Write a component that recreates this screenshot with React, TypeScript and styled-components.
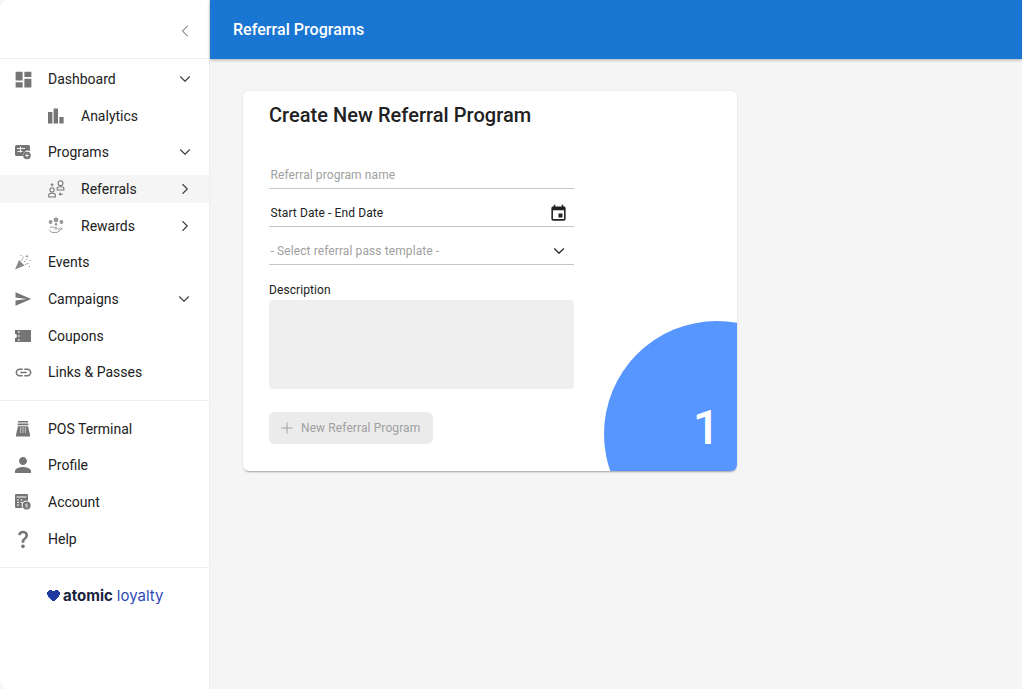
import React from 'react';
import styled, { createGlobalStyle } from 'styled-components';
import { ChevronDown, ChevronLeft, ChevronRight, Plus } from 'lucide-react';

const GlobalStyle = createGlobalStyle`
  html, body {
    margin: 0;
    padding: 0;
    height: 100%;
  }
  body {
    font-family: Roboto, 'Liberation Sans', sans-serif;
    background: #f5f5f5;
  }
`;

const Frame = styled.div`
  display: flex;
  height: 100vh;
  overflow: hidden;
  background: #f5f5f5;
`;

const Sidebar = styled.aside`
  width: 209px;
  flex-shrink: 0;
  background: #ffffff;
  border-right: 1px solid #eeeeee;
  border-top-left-radius: 8px;
  border-bottom-left-radius: 8px;
  display: flex;
  flex-direction: column;
`;

const SidebarTop = styled.div`
  height: 59px;
  display: flex;
  align-items: center;
  justify-content: flex-end;
  padding: 3px 14px 0 0;
  box-sizing: border-box;
  border-bottom: 1px solid #eeeeee;
  color: #757575;
`;

const NavGroup = styled.nav<{ $secondary?: boolean }>`
  display: flex;
  flex-direction: column;
  gap: 8.67px;
  padding: ${p => (p.$secondary ? '13.5px 0 14.5px' : '6px 0 14px')};
  border-bottom: 1px solid #eeeeee;
`;

const NavRow = styled.div<{ $sub?: boolean; $active?: boolean }>`
  height: 28px;
  display: flex;
  align-items: center;
  padding-left: ${p => (p.$sub ? '48px' : '15px')};
  padding-right: 15px;
  background: ${p => (p.$active ? '#f5f5f5' : 'transparent')};
  color: #212121;
  font-size: 14px;
`;

const IconSlot = styled.span`
  width: 16px;
  height: 16px;
  margin-right: 17px;
  display: flex;
  align-items: center;
  justify-content: center;
  flex-shrink: 0;
  color: #757575;

  svg {
    flex-shrink: 0;
    display: block;
  }
`;

const NavLabel = styled.span`
  flex: 1;
  white-space: nowrap;
`;

const Caret = styled.span<{ $nudge?: boolean }>`
  display: flex;
  color: #424242;
  margin-right: ${p => (p.$nudge ? '1px' : '0')};
`;

const Logo = styled.div`
  display: flex;
  align-items: center;
  padding: 19px 0 0 47px;
  font-family: Inter, 'Noto Sans', sans-serif;
  font-size: 15px;
  line-height: 18px;
  white-space: nowrap;
`;

const LogoMark = styled.svg`
  width: 13px;
  height: 12px;
  margin-right: 3px;
  color: #1f3a9e;
`;

const LogoStrong = styled.span`
  font-weight: 700;
  color: #1a2240;
  margin-right: 4px;
`;

const LogoLight = styled.span`
  font-weight: 400;
  color: #2f4bb8;
`;

const Main = styled.main`
  flex: 1;
  min-width: 0;
  display: flex;
  flex-direction: column;
`;

const TopBar = styled.header`
  height: 59px;
  flex-shrink: 0;
  background: #1976d2;
  color: #ffffff;
  display: flex;
  align-items: center;
  padding-left: 23px;
  font-size: 16px;
  font-weight: 500;
  letter-spacing: 0.05px;
  box-shadow: 0 1px 3px rgba(0, 0, 0, 0.3);
`;

const Content = styled.div`
  padding: 32px 33px;
`;

const Card = styled.section`
  position: relative;
  overflow: hidden;
  width: 494px;
  height: 380px;
  box-sizing: border-box;
  padding: 10px 26px 0;
  background: #ffffff;
  border-radius: 6px;
  box-shadow: 0 2px 2px -1px rgba(0, 0, 0, 0.32), 0 0 3px rgba(0, 0, 0, 0.08);
`;

const CardTitle = styled.h2`
  margin: 0 0 22px;
  font-size: 20px;
  font-weight: 500;
  line-height: 28px;
  letter-spacing: 0.04px;
  color: #212121;
`;

const Form = styled.div`
  width: 305px;
  display: flex;
  flex-direction: column;
`;

const Field = styled.div`
  height: 38px;
  box-sizing: border-box;
  display: flex;
  align-items: center;
  justify-content: space-between;
  padding: 11px 6px 0 1.5px;
  border-bottom: 1px solid #c4c4c4;
`;

const FieldText = styled.span<{ $muted?: boolean }>`
  font-size: 12px;
  letter-spacing: 0.1px;
  color: ${p => (p.$muted ? '#a0a0a0' : '#212121')};
`;

const FieldIcon = styled.span`
  display: flex;
  color: #212121;
`;

const FieldLabel = styled.label`
  margin-top: 16px;
  font-size: 12px;
  line-height: 18px;
  letter-spacing: 0.08px;
  color: #212121;
`;

const TextArea = styled.div`
  margin-top: 1px;
  height: 89px;
  background: #efefef;
  border-radius: 4px;
`;

const AddButton = styled.button`
  margin-top: 23px;
  width: 164px;
  height: 32px;
  padding: 0 0 0 9px;
  display: flex;
  align-items: center;
  gap: 5px;
  border: none;
  border-radius: 6px;
  background: #ebebeb;
  color: #a0a0a0;
  font-family: inherit;
  font-size: 12px;
  font-weight: 400;
  letter-spacing: 0.1px;
`;

const StepBubble = styled.div`
  position: absolute;
  left: 361px;
  top: 230px;
  width: 226px;
  height: 226px;
  border-radius: 50%;
  background: #5896ff;
`;

const StepNumber = styled.span`
  position: absolute;
  right: 17px;
  bottom: 19px;
  font-size: 48px;
  font-weight: 500;
  line-height: 48px;
  color: #ffffff;
`;

const Mi: React.FC<{ size: number; d: string }> = ({ size, d }) => (
  <svg width={size} height={size} viewBox="0 0 24 24" fill="currentColor">
    <path d={d} />
  </svg>
);

const BarsIcon = () => (
  <svg width="16" height="16" viewBox="0 0 16 16" fill="currentColor">
    <path d="M0 4h4.4v11.5H0zM5.6.4H10v15.1H5.6zM11.4 9H15.6v6.5h-4.2z" />
  </svg>
);

const ProgramsIcon = () => (
  <svg width="16" height="16" viewBox="0 0 16 16" fill="currentColor">
    <path d="M1.5 1h12A1.5 1.5 0 0 1 15 2.5V7a4.5 4.5 0 0 0-6.5 5H1.5A1.5 1.5 0 0 1 0 10.5v-8A1.5 1.5 0 0 1 1.5 1z" />
    <path d="M2 4.5h8M5.5 2.5v6M2.5 7.5h5" stroke="#fff" strokeWidth="0.9" fill="none" />
    <circle cx="12" cy="11.5" r="3.8" />
    <path d="M12 9.6v3.8M10.1 11.5h3.8" stroke="#fff" strokeWidth="0.8" />
  </svg>
);

const ReferralsIcon = () => (
  <svg width="17" height="18" viewBox="0 0 16 17" fill="none" stroke="currentColor" strokeWidth="1">
    <circle cx="3.8" cy="9.4" r="2" />
    <path d="M.7 16v-1.6c0-1 1.3-1.8 3.1-1.8s3.1.8 3.1 1.8V16z" />
    <circle cx="11.8" cy="3" r="2.3" />
    <path d="M8.6 9.4V8c0-1 1.4-1.7 3.2-1.7S15 7 15 8v1.4z" />
    <path d="M3.8 3v2.8M2.4 4.4h2.8M10.6 13.4h3.4M10.6 13.4l1.2-1.2M10.6 13.4l1.2 1.2" />
  </svg>
);

const RewardsIcon = () => (
  <svg width="16" height="17" viewBox="0 0 16 17" fill="currentColor" opacity="0.75">
    <circle cx="8" cy="3" r="2.4" />
    <circle cx="2.6" cy="5" r="1.9" />
    <circle cx="13.4" cy="5" r="1.9" />
    <circle cx="8" cy="7.4" r="1.3" />
    <path d="M2 10.6c1.6-1 3-.8 4.4 0h2c1 0 1 1.4 0 1.4H6.6M1.6 13l2 2.4h5.6l5-3.8c-.6-1-1.6-.8-2.4-.2l-2 1.2" fill="none" stroke="currentColor" strokeWidth="1" />
  </svg>
);

const EventsIcon = () => (
  <svg width="16" height="16" viewBox="0 0 16 16" fill="currentColor" opacity="0.85">
    <path d="M0 15.5 4 6l5.5 5.5z" />
    <path d="M6.5 6.5 9 2M9 8l3.5-3.5M10 10.5l4-1.5" stroke="currentColor" strokeWidth="1" fill="none" strokeDasharray="1.4 1" />
    <path d="M12 .5l.5 1.3 1.3.5-1.3.5-.5 1.3-.5-1.3-1.3-.5 1.3-.5zM5.5 1h1v1h-1zM14.5 6h1v1h-1zM14 12h1v1h-1z" />
  </svg>
);

const CouponIcon = () => (
  <svg width="16" height="12" viewBox="0 0 16 12" fill="currentColor">
    <path d="M0 0h16v12H0V8a2 2 0 0 0 0-4z" />
    <path d="M3.4 1h1v2h-1zM3.4 5h1v2h-1zM3.4 9h1v2h-1z" fill="#fff" />
  </svg>
);

const PosIcon = () => (
  <svg width="16" height="16" viewBox="0 0 16 16" fill="currentColor">
    <path d="M3 0h10v1.6H3zM2.6 2.6h10.8v1.6H2.6z" />
    <path d="M3 5.2h10l2 8.6v1.6H1v-1.6z" />
    <path d="M5 7h6M5 9h6M5 11h6" stroke="#fff" strokeWidth="1" strokeDasharray="1.2 1.2" fill="none" />
  </svg>
);

const AccountIcon = () => (
  <svg width="16" height="16" viewBox="0 0 16 16" fill="currentColor">
    <path d="M1.2 0h10.6A1.2 1.2 0 0 1 13 1.2V7a4.6 4.6 0 0 0-5.4 7H1.2A1.2 1.2 0 0 1 0 12.8V1.2A1.2 1.2 0 0 1 1.2 0z" />
    <path d="M1.5 3h10M2 6h2M5.5 6h2M2 8.5h2M5.5 8.5h2M2 11h2" stroke="#fff" strokeWidth="1" fill="none" />
    <circle cx="11.6" cy="11.6" r="4" />
    <path d="M12.8 10.2h-1.8a.8.8 0 0 0 0 1.5h1.2a.8.8 0 0 1 0 1.5h-1.8" stroke="#fff" strokeWidth="0.7" fill="none" />
  </svg>
);

const paths = {
  dashboard: 'M3 13h8V3H3v10zm0 8h8v-6H3v6zm10 0h8V11h-8v10zm0-18v6h8V3h-8z',
  send: 'M2.01 21L23 12 2.01 3 2 10l15 2-15 2z',
  link: 'M3.9 12c0-1.71 1.39-3.1 3.1-3.1h4V7H7c-2.76 0-5 2.24-5 5s2.24 5 5 5h4v-1.9H7c-1.71 0-3.1-1.39-3.1-3.1zM8 13h8v-2H8v2zm9-6h-4v1.9h4c1.71 0 3.1 1.39 3.1 3.1s-1.39 3.1-3.1 3.1h-4V17h4c2.76 0 5-2.24 5-5s-2.24-5-5-5z',
  person: 'M12 12c2.21 0 4-1.79 4-4s-1.79-4-4-4-4 1.79-4 4 1.79 4 4 4zm0 2c-2.67 0-8 1.34-8 4v2h16v-2c0-2.66-5.33-4-8-4z',
  help: 'M11.07 12.85c.77-1.39 2.25-2.21 3.11-3.44.91-1.29.4-3.7-2.18-3.7-1.69 0-2.52 1.28-2.87 2.34L6.54 6.96C7.25 4.83 9.18 3 11.99 3c2.35 0 3.96 1.07 4.78 2.41.7 1.15 1.11 3.3.03 4.9-1.2 1.77-2.35 2.31-2.97 3.45-.25.46-.35.76-.35 2.24h-2.89c-.01-.78-.13-2.05.48-3.15zM14 20c0 1.1-.9 2-2 2s-2-.9-2-2 .9-2 2-2 2 .9 2 2z',
  event: 'M17 12h-5v5h5v-5zM16 1v2H8V1H6v2H5c-1.11 0-1.99.9-1.99 2L3 19c0 1.1.89 2 2 2h14c1.1 0 2-.9 2-2V5c0-1.1-.9-2-2-2h-1V1h-2zm3 18H5V8h14v11z',
};

type NavItem = {
  label: string;
  icon: React.ReactNode;
  sub?: boolean;
  active?: boolean;
  caret?: 'down' | 'right';
  nudge?: boolean;
};

const mainNav: NavItem[] = [
  { label: 'Dashboard', icon: <Mi size={21} d={paths.dashboard} />, caret: 'down' },
  { label: 'Analytics', icon: <BarsIcon />, sub: true },
  { label: 'Programs', icon: <ProgramsIcon />, caret: 'down' },
  { label: 'Referrals', icon: <ReferralsIcon />, sub: true, active: true, caret: 'right' },
  { label: 'Rewards', icon: <RewardsIcon />, sub: true, caret: 'right' },
  { label: 'Events', icon: <EventsIcon /> },
  { label: 'Campaigns', icon: <Mi size={18} d={paths.send} />, caret: 'down', nudge: true },
  { label: 'Coupons', icon: <CouponIcon /> },
  { label: 'Links & Passes', icon: <Mi size={19} d={paths.link} /> },
];

const secondaryNav: NavItem[] = [
  { label: 'POS Terminal', icon: <PosIcon /> },
  { label: 'Profile', icon: <Mi size={24} d={paths.person} /> },
  { label: 'Account', icon: <AccountIcon /> },
  { label: 'Help', icon: <Mi size={22} d={paths.help} /> },
];

const renderRow = (item: NavItem) => (
  <NavRow key={item.label} $sub={item.sub} $active={item.active}>
    <IconSlot>{item.icon}</IconSlot>
    <NavLabel>{item.label}</NavLabel>
    {item.caret && (
      <Caret $nudge={item.nudge}>
        {item.caret === 'down' ? (
          <ChevronDown size={18} strokeWidth={1.5} />
        ) : (
          <ChevronRight size={18} strokeWidth={1.5} />
        )}
      </Caret>
    )}
  </NavRow>
);

export default function App() {
  return (
    <Frame>
      <GlobalStyle />
      <Sidebar>
        <SidebarTop>
          <ChevronLeft size={20} strokeWidth={1.25} />
        </SidebarTop>
        <NavGroup>{mainNav.map(renderRow)}</NavGroup>
        <NavGroup $secondary>{secondaryNav.map(renderRow)}</NavGroup>
        <Logo>
          <LogoMark viewBox="0 0 13 12" fill="currentColor">
            <path d="M2 0h3v1h3V0h3v1h1v1h1v3h-1v2h-1v1h-1v1H9v1H8v1H5v-1H4V9H3V8H2V7H1V5H0V2h1V1h1z" />
          </LogoMark>
          <LogoStrong>atomic</LogoStrong>
          <LogoLight>loyalty</LogoLight>
        </Logo>
      </Sidebar>
      <Main>
        <TopBar>Referral Programs</TopBar>
        <Content>
          <Card>
            <StepBubble />
            <StepNumber>1</StepNumber>
            <CardTitle>Create New Referral Program</CardTitle>
            <Form>
              <Field>
                <FieldText $muted>Referral program name</FieldText>
              </Field>
              <Field>
                <FieldText>Start Date - End Date</FieldText>
                <FieldIcon>
                  <Mi size={19} d={paths.event} />
                </FieldIcon>
              </Field>
              <Field>
                <FieldText $muted>- Select referral pass template -</FieldText>
                <FieldIcon>
                  <ChevronDown size={18} strokeWidth={1.5} />
                </FieldIcon>
              </Field>
              <FieldLabel>Description</FieldLabel>
              <TextArea />
              <AddButton disabled>
                <Plus size={18} strokeWidth={1.25} />
                New Referral Program
              </AddButton>
            </Form>
          </Card>
        </Content>
      </Main>
    </Frame>
  );
}
